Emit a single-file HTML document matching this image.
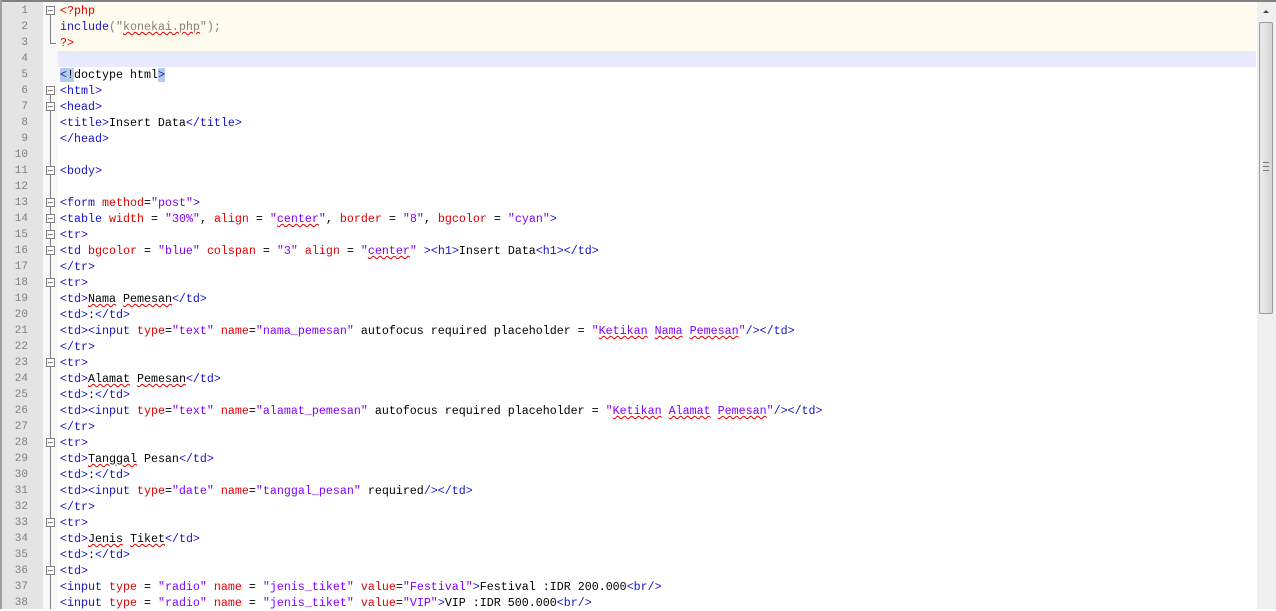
<!DOCTYPE html>
<html><head><meta charset="utf-8"><style>
body{margin:0;width:1276px;height:609px;overflow:hidden;background:#fff;position:relative;font-family:"Liberation Mono",monospace}
#top{position:absolute;left:0;top:0;width:1276px;height:2px;background:#808080}
#lb{position:absolute;left:0;top:0;width:2px;height:609px;background:#a0a0a0}
#gut{position:absolute;left:2px;top:2px;width:41px;height:607px;background:#e4e4e4}
#fold{position:absolute;left:43px;top:2px;width:15px;height:607px;background:#f8f8f8}
.ln{position:absolute;left:2px;width:26px;text-align:right;font-size:11px;color:#808080;height:16px;line-height:16px;font-family:"Liberation Mono",monospace}
.cl{position:absolute;left:60px;height:16px;line-height:16px;font-size:11.67px;white-space:pre;color:#000}
.bg{position:absolute;left:58px;width:1198px;height:16px}
.t{color:#1414c8}.a{color:#e00000}.s{color:#8000ff}.p{color:#e00000}.w{text-decoration:underline wavy #e00000;text-decoration-thickness:1px}
.bx{position:absolute;left:46px;width:9px;height:9px;border:1px solid #808080;background:#fff;box-sizing:border-box}
.bx:after{content:"";position:absolute;left:1px;top:3px;width:5px;height:1px;background:#808080}
.vl{position:absolute;left:50px;width:1px;background:#808080}
#sb{position:absolute;left:1257px;top:2px;width:19px;height:607px;background:#f0f0f0}
#th{position:absolute;left:2px;top:20px;width:14px;height:292px;border:1px solid #9a9a9a;border-radius:2px;background:linear-gradient(90deg,#ececec,#d4d4d4);box-sizing:border-box}
#grip{position:absolute;left:3px;top:139px;width:6px;height:7px;border-top:1px solid #777;border-bottom:1px solid #777}
#grip:after{content:"";position:absolute;left:0;top:3px;width:6px;height:1px;background:#777}
#up{position:absolute;left:6px;top:8px;width:0;height:0;border-left:3px solid transparent;border-right:3px solid transparent;border-bottom:3px solid #444}
</style></head><body>
<div id="gut"></div><div id="fold"></div>
<div class="bg" style="top:3px;height:48px;background:#fffbee"></div>
<div class="bg" style="top:51px;background:#e8e8ff"></div>
<div class="vl" style="top:14px;height:30px"></div>
<div class="vl" style="left:50px;top:43px;width:6px;height:1px"></div>
<div class="vl" style="top:94px;height:515px"></div>
<div id="lines"></div>
<script>
var L=[
'<span class="p">&lt;?php</span>',
'<span class="t">include</span><span style="color:#808080">(</span><span style="color:#808080">"<span class="w">konekai.php</span>"</span><span style="color:#808080">);</span>',
'<span class="p">?&gt;</span>',
'',
'<span style="background:#b4cceb"><span class="t">&lt;</span>!</span>doctype html<span style="background:#b4cceb" class="t">&gt;</span>',
'<span class="t">&lt;html&gt;</span>',
'<span class="t">&lt;head&gt;</span>',
'<span class="t">&lt;title&gt;</span>Insert Data<span class="t">&lt;/title&gt;</span>',
'<span class="t">&lt;/head&gt;</span>',
'',
'<span class="t">&lt;body&gt;</span>',
'',
'<span class="t">&lt;form </span><span class="a">method</span>=<span class="s">"post"</span><span class="t">&gt;</span>',
'<span class="t">&lt;table </span><span class="a">width</span> = <span class="s">"30%"</span>, <span class="a">align</span> = <span class="s">"<span class="w">center</span>"</span>, <span class="a">border</span> = <span class="s">"8"</span>, <span class="a">bgcolor</span> = <span class="s">"cyan"</span><span class="t">&gt;</span>',
'<span class="t">&lt;tr&gt;</span>',
'<span class="t">&lt;td </span><span class="a">bgcolor</span> = <span class="s">"blue"</span> <span class="a">colspan</span> = <span class="s">"3"</span> <span class="a">align</span> = <span class="s">"<span class="w">center</span>"</span> <span class="t">&gt;&lt;h1&gt;</span>Insert Data<span class="t">&lt;h1&gt;&lt;/td&gt;</span>',
'<span class="t">&lt;/tr&gt;</span>',
'<span class="t">&lt;tr&gt;</span>',
'<span class="t">&lt;td&gt;</span><span class="w">Nama</span> <span class="w">Pemesan</span><span class="t">&lt;/td&gt;</span>',
'<span class="t">&lt;td&gt;</span>:<span class="t">&lt;/td&gt;</span>',
'<span class="t">&lt;td&gt;&lt;input </span><span class="a">type</span>=<span class="s">"text"</span> <span class="a">name</span>=<span class="s">"nama_pemesan"</span> autofocus required placeholder = <span class="s">"<span class="w">Ketikan</span> <span class="w">Nama</span> <span class="w">Pemesan</span>"</span><span class="t">/&gt;&lt;/td&gt;</span>',
'<span class="t">&lt;/tr&gt;</span>',
'<span class="t">&lt;tr&gt;</span>',
'<span class="t">&lt;td&gt;</span><span class="w">Alamat</span> <span class="w">Pemesan</span><span class="t">&lt;/td&gt;</span>',
'<span class="t">&lt;td&gt;</span>:<span class="t">&lt;/td&gt;</span>',
'<span class="t">&lt;td&gt;&lt;input </span><span class="a">type</span>=<span class="s">"text"</span> <span class="a">name</span>=<span class="s">"alamat_pemesan"</span> autofocus required placeholder = <span class="s">"<span class="w">Ketikan</span> <span class="w">Alamat</span> <span class="w">Pemesan</span>"</span><span class="t">/&gt;&lt;/td&gt;</span>',
'<span class="t">&lt;/tr&gt;</span>',
'<span class="t">&lt;tr&gt;</span>',
'<span class="t">&lt;td&gt;</span><span class="w">Tanggal</span> Pesan<span class="t">&lt;/td&gt;</span>',
'<span class="t">&lt;td&gt;</span>:<span class="t">&lt;/td&gt;</span>',
'<span class="t">&lt;td&gt;&lt;input </span><span class="a">type</span>=<span class="s">"date"</span> <span class="a">name</span>=<span class="s">"tanggal_pesan"</span> required<span class="t">/&gt;&lt;/td&gt;</span>',
'<span class="t">&lt;/tr&gt;</span>',
'<span class="t">&lt;tr&gt;</span>',
'<span class="t">&lt;td&gt;</span><span class="w">Jenis</span> <span class="w">Tiket</span><span class="t">&lt;/td&gt;</span>',
'<span class="t">&lt;td&gt;</span>:<span class="t">&lt;/td&gt;</span>',
'<span class="t">&lt;td&gt;</span>',
'<span class="t">&lt;input </span><span class="a">type</span> = <span class="s">"radio"</span> <span class="a">name</span> = <span class="s">"jenis_tiket"</span> <span class="a">value</span>=<span class="s">"Festival"</span><span class="t">&gt;</span>Festival :IDR 200.000<span class="t">&lt;br/&gt;</span>',
'<span class="t">&lt;input </span><span class="a">type</span> = <span class="s">"radio"</span> <span class="a">name</span> = <span class="s">"jenis_tiket"</span> <span class="a">value</span>=<span class="s">"VIP"</span><span class="t">&gt;</span>VIP :IDR 500.000<span class="t">&lt;br/&gt;</span>'
];
var boxes=[1,6,7,11,13,14,15,16,18,23,28,33,36];
var h='';
for(var i=0;i<L.length;i++){var y=3+i*16;
h+='<div class="ln" style="top:'+y+'px">'+(i+1)+'</div><div class="cl" style="top:'+y+'px">'+L[i]+'</div>';
if(boxes.indexOf(i+1)>=0)h+='<div class="bx" style="top:'+(y+3)+'px"></div>';}
document.getElementById('lines').innerHTML=h;
</script>
<div id="sb"><div id="up"></div><div id="th"><div id="grip"></div></div></div>
<div id="top"></div><div id="lb"></div>
</body></html>
